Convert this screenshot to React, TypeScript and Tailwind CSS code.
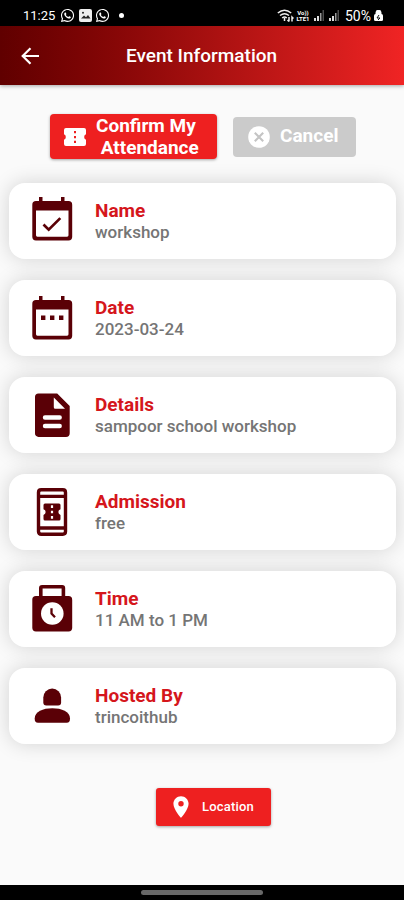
import type { ReactNode } from "react";
import { MdLocationOn } from "react-icons/md";
import { FaWhatsapp } from "react-icons/fa";

const DARK = "#5a0006";

function CalendarFrame({ children }: { children: ReactNode }) {
  return (
    <svg width="44" height="76" viewBox="0 0 44 76" fill={DARK}>
      <path d="M9 14h3.500v5H9zM31 14h3.500v5H31z" />
      <path
        fillRule="evenodd"
        d="M6 18h32.500a3.700 3.700 0 0 1 3.700 3.700v32.100a3.700 3.700 0 0 1-3.700 3.700H6a3.700 3.700 0 0 1-3.700-3.700V21.700a3.700 3.700 0 0 1 3.700-3.700zM6 27.500v24.800q0 1.400 1.400 1.400h29.700q1.400 0 1.400-1.400V27.500z"
      />
      {children}
    </svg>
  );
}

function CheckCalendar() {
  return (
    <CalendarFrame>
      <path d="m13.500 41.500 5.200 5.200 11.600-11.600" fill="none" stroke={DARK} strokeWidth="2.700" />
    </CalendarFrame>
  );
}

function DotsCalendar() {
  return (
    <div className="translate-y-0.5">
      <CalendarFrame>
        <path d="M11 33.500h4.400v4.400H11zM20 33.500h4.400v4.400H20zM29 33.500h4.400v4.400H29z" />
      </CalendarFrame>
    </div>
  );
}

function DocumentIcon() {
  return (
    <svg width="44" height="76" viewBox="0 0 44 76" fill={DARK}>
      <path d="M8.500 16.500h18.700L39.700 29v27.200a3.700 3.700 0 0 1-3.700 3.700H8.500A3.500 3.500 0 0 1 5 56.200V20a3.500 3.500 0 0 1 3.500-3.500z" />
      <path d="M23.800 20.500 35 31.800H25.300a1.500 1.500 0 0 1-1.500-1.500z" fill="#fff" />
      <path d="M15 40.500h14.700M15 49h14.700" stroke="#fff" strokeWidth="4.400" strokeLinecap="round" />
    </svg>
  );
}

function TicketPhone() {
  return (
    <svg width="44" height="76" viewBox="0 0 44 76" fill={DARK}>
      <path
        d="M11.200 15.800h21.600q2.700 0 2.700 2.700v39q0 2.700-2.700 2.700H11.200q-2.700 0-2.700-2.700v-39q0-2.700 2.700-2.700zM8.500 22.400h27M8.500 54h27"
        fill="none"
        stroke={DARK}
        strokeWidth="3.400"
      />
      <path d="M15 29.500h14q1.500 0 1.500 1.500v4.300a2.900 2.900 0 0 0 0 5.600v4.200q0 1.500-1.500 1.500H15q-1.500 0-1.500-1.500v-4.200a2.900 2.900 0 0 0 0-5.600V31q0-1.500 1.500-1.500z" />
      <path d="M22 31.300v2.600M22 36.700v2.600M22 42.100v2.600" stroke="#fff" strokeWidth="2.200" />
    </svg>
  );
}

function LockClock() {
  return (
    <svg width="44" height="76" viewBox="0 0 44 76">
      <path d="M10.800 28V17q0-1.300 1.300-1.300h20q1.300 0 1.300 1.300v11" fill="none" stroke={DARK} strokeWidth="3.600" />
      <rect x="2.300" y="25" width="39.900" height="35.500" rx="3.700" fill={DARK} />
      <circle cx="22.300" cy="42.500" r="11.300" fill="#fff" />
      <path d="M21.500 37.200v5.400l3.500 3.600" fill="none" stroke={DARK} strokeWidth="2.300" />
    </svg>
  );
}

function PersonIcon() {
  return (
    <svg width="44" height="76" viewBox="0 0 44 76" fill={DARK}>
      <path d="M13.300 29.500a8.900 8.900 0 0 1 17.800 0v5q0 3-3 3H16.300q-3 0-3-3z" />
      <path d="M4.700 50.500C4.700 43.500 13 40.300 22.300 40.300S40 43.500 40 50.500c0 3-1 4.200-3.300 4.200H8c-2.300 0-3.300-1.200-3.300-4.200z" />
    </svg>
  );
}

function SignalBars() {
  return (
    <svg width="10" height="11" viewBox="0 0 10 11" fill="#ddd">
      <path d="M0 8h2v3H0zM3 6h2v5H3z" />
      <path d="M6 3h1.500v8H6z" opacity=".7" />
      <path d="M8.500 0H10v11H8.500z" opacity=".35" />
    </svg>
  );
}

function StatusBar() {
  return (
    <div className="flex h-[26px] items-center bg-black pt-[5px] pr-[21px] pl-[23px] text-white">
      <span className="w-[37px] text-[13px] leading-none">11:25</span>
      <FaWhatsapp className="size-[15px]" />
      <svg className="ml-1" width="13" height="13" viewBox="0 0 13 13">
        <rect width="13" height="13" rx="2" fill="#eee" />
        <path d="M2 9.500 5 6.500l2 1.800 2-2.300 2.500 3.500z" fill="#222" />
        <circle cx="4" cy="3.700" r="1" fill="#222" />
      </svg>
      <FaWhatsapp className="ml-[3px] size-[15px]" />
      <span className="ml-[9px] size-[5px] rounded-full bg-white" />
      <div className="ml-auto flex items-center">
        <svg width="17" height="13" viewBox="0 0 17 13" fill="none" stroke="#eee" strokeWidth="1.500">
          <path d="M.8 4Q7.500-1.500 14.200 4M3 6.500q4.500-3.600 9 0M5.200 9q2.300-1.800 4.600 0" />
          <path d="M7.500 9v3M12 8v4.500m-1.500-1.500 1.500 1.500M15 12.500V8l1.500 1.500" />
        </svg>
        <span className="ml-[2px] flex w-[14px] flex-col items-center text-[6px] leading-[6px] font-bold">
          <span>Vo))</span>
          <span>LTE1</span>
        </span>
        <span className="ml-1 flex gap-[5px]">
          <SignalBars />
          <SignalBars />
        </span>
        <span className="ml-[6px] text-[14px] leading-none">50%</span>
        <svg className="ml-[3px]" width="9" height="11" viewBox="0 0 9 11">
          <path d="M2 4V2.500a2.500 2.500 0 0 1 5 0V4" fill="#fff" stroke="#fff" strokeWidth="1" />
          <rect y="4" width="9" height="7" rx="1.500" fill="#fff" />
          <path d="M5 5 3 8h3L4 10" fill="none" stroke="#111" />
        </svg>
      </div>
    </div>
  );
}

const rows = [
  { title: "Name", value: "workshop", icon: <CheckCalendar /> },
  { title: "Date", value: "2023-03-24", icon: <DotsCalendar /> },
  { title: "Details", value: "sampoor school workshop", icon: <DocumentIcon /> },
  { title: "Admission", value: "free", icon: <TicketPhone /> },
  { title: "Time", value: "11 AM to 1 PM", icon: <LockClock /> },
  { title: "Hosted By", value: "trincoithub", icon: <PersonIcon /> },
];

export default function App() {
  return (
    <div className="flex h-[900px] w-[404px] flex-col overflow-hidden bg-[#fafafa] font-['Roboto',sans-serif]">
      <StatusBar />
      <header className="flex h-[59px] items-center bg-linear-to-r from-[#600000] to-[#f02424] pl-[21px] shadow-[0_1px_4px_rgba(0,0,0,0.35)]">
        <svg width="18" height="18" viewBox="0 0 18 18" fill="none" stroke="#fff" strokeWidth="2.200">
          <path d="M18 9H2M9.500 1.200 1.700 9l7.800 7.800" />
        </svg>
        <h1 className="ml-[87px] text-[19px] leading-6 font-medium text-white">Event Information</h1>
      </header>

      <div className="flex items-center gap-[16px] pt-[29px] pl-[50px] text-[19px] font-bold text-white">
        <button className="flex h-[45px] w-[167px] items-center rounded-[4px] bg-[#ee2020] pl-[14px] shadow-[0_1px_3px_rgba(0,0,0,0.35)]">
          <svg width="22" height="18" viewBox="0 0 22 18">
            <path d="M2 0h18q2 0 2 2v4.300a2.900 2.900 0 0 0 0 5.400V16q0 2-2 2H2q-2 0-2-2v-4.300a2.900 2.900 0 0 0 0-5.400V2q0-2 2-2z" fill="#fff" />
            <path d="M11 3v2.300M11 7.900v2.300M11 12.700V15" stroke="#ee2020" strokeWidth="2" />
          </svg>
          <span className="ml-[10px] text-left leading-[22px] whitespace-pre">{"Confirm My\n Attendance"}</span>
        </button>
        <button className="flex h-[40px] w-[123px] items-center rounded-[4px] bg-[#cbcbcb] pl-[15px]">
          <svg width="22" height="22" viewBox="0 0 22 22">
            <circle cx="11" cy="11" r="10.800" fill="#fff" />
            <path d="m6.800 6.800 8.400 8.400m0-8.400-8.400 8.400" stroke="#c4c4c4" strokeWidth="2.100" />
          </svg>
          <span className="ml-[10px]">Cancel</span>
        </button>
      </div>

      <div className="mt-6 flex flex-col gap-[21px] pr-[8px] pl-[9px]">
        {rows.map((row) => (
          <div key={row.title} className="flex h-[76px] rounded-[16px] bg-white pl-[21px] shadow-[0_0_20px_rgba(0,0,0,0.16)]">
            {row.icon}
            <div className="ml-[21px] flex flex-col pt-[17px]">
              <span className="text-[19px] leading-[22px] font-bold text-[#d5161c]">{row.title}</span>
              <span className="text-[17px] leading-[21px] font-medium text-[#757575]">{row.value}</span>
            </div>
          </div>
        ))}
      </div>

      <button className="mt-[44px] ml-[156px] flex h-[38px] w-[115px] shrink-0 items-center rounded-[3px] bg-[#ee2020] pl-[12px] text-white shadow-[0_1px_3px_rgba(0,0,0,0.35)]">
        <MdLocationOn className="size-[26px]" />
        <span className="ml-[8px] text-[13px] font-medium tracking-[0.2px]">Location</span>
      </button>

      <div className="mt-auto flex h-[15px] justify-center bg-black pt-[5px]">
        <div className="h-[5px] w-[122px] rounded-full bg-[#686868]" />
      </div>
    </div>
  );
}
